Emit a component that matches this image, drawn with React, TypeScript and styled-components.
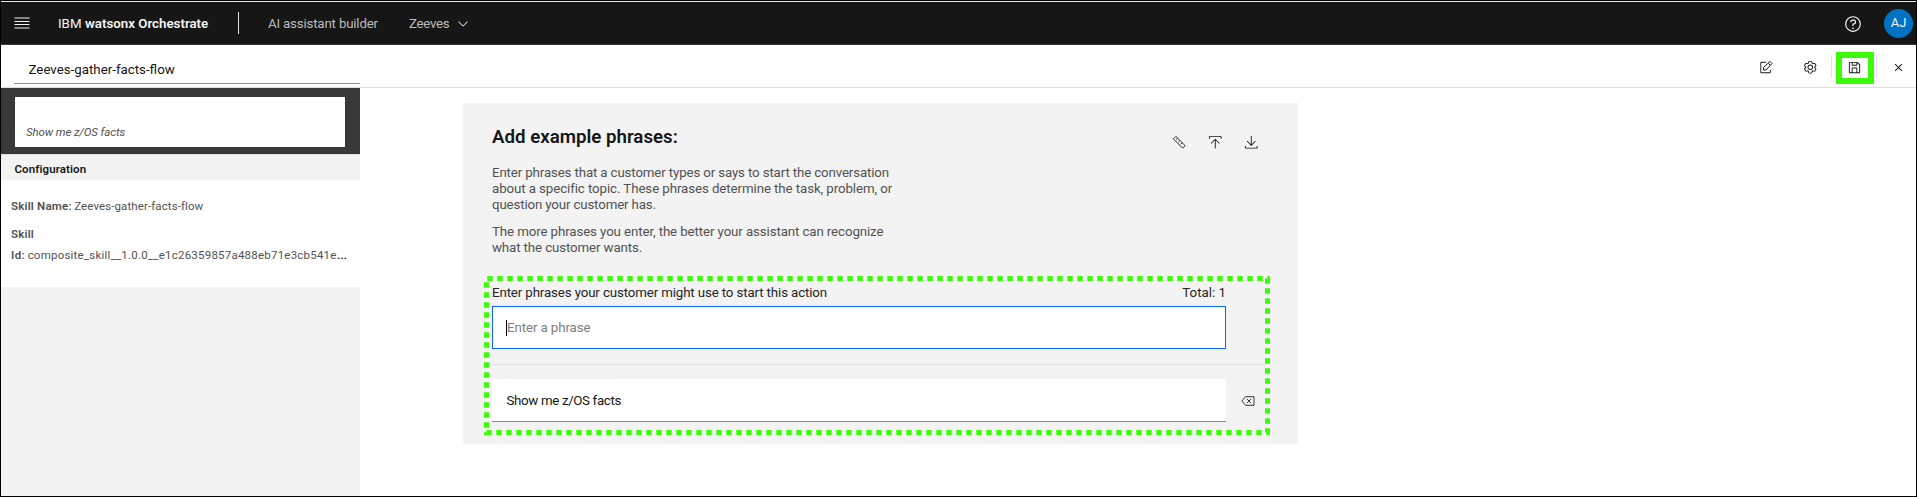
import React from "react";
import styled, { createGlobalStyle } from "styled-components";

const GlobalStyle = createGlobalStyle`
  *, *::before, *::after { box-sizing: border-box; }
  body { margin: 0; background: #fff; }
  h2, p { margin: 0; }
  button { border: 0; padding: 0; background: none; color: inherit; font: inherit; }
`;

const Frame = styled.div`
  position: relative;
  display: flex;
  flex-direction: column;
  width: 1917px;
  height: 497px;
  border: 1px solid #000;
  background: #fff;
  color: #161616;
  font: 400 13.3px/16px Roboto, "Liberation Sans", sans-serif;
  overflow: hidden;
`;

const Text = styled.span<{ $track?: number }>`
  white-space: nowrap;
  letter-spacing: ${(p) => p.$track ?? 0}px;
`;

const Header = styled.header`
  display: flex;
  align-items: center;
  flex: none;
  height: 44px;
  padding: 0 3px 0 13px;
  border-top: 1px solid #e8e8e8;
  border-bottom: 1px solid #393939;
  background: #161616;
  color: #c6c6c6;
`;

const Product = styled.div`
  display: flex;
  gap: 3.5px;
  width: 180px;
  margin-left: 28px;
  padding-top: 2px;
  color: #f4f4f4;
`;

const Strong = styled(Text)`
  font-weight: 600;
`;

const HeaderDivider = styled.div`
  width: 1px;
  height: 22px;
  background: #e0e0e0;
`;

const HeaderLinks = styled.nav`
  display: flex;
  align-items: center;
  flex: 1;
  margin-left: 29px;
  padding-top: 2px;
  color: #bdbdbd;
`;

const LinkText = styled(Text)<{ $gap: number }>`
  margin-right: ${(p) => p.$gap}px;
`;

const HelpButton = styled.button`
  display: flex;
  margin-right: 22px;
  padding-top: 1px;
  color: #fff;
`;

const Avatar = styled.div`
  display: flex;
  align-items: center;
  justify-content: center;
  width: 29px;
  height: 29px;
  border-radius: 50%;
  background: #0072c3;
  color: #e5f6ff;
  font-size: 13px;
`;

const Toolbar = styled.div`
  display: flex;
  flex: none;
  height: 43px;
  padding-left: 13px;
  border-bottom: 1px solid #e0e0e0;
`;

const TitleField = styled.div`
  width: 346px;
  height: 39px;
  padding: 17px 0 0 14.5px;
  border-bottom: 1px solid #8d8d8d;
`;

const Tools = styled.div`
  display: flex;
  align-items: center;
  margin-left: auto;
  height: 44px;
`;

const ToolButton = styled.button<{ $last?: boolean }>`
  display: flex;
  align-items: center;
  justify-content: center;
  width: ${(p) => (p.$last ? 39 : 44)}px;
  padding-left: ${(p) => (p.$last ? 4 : 2)}px;
  height: 44px;
`;

const ToolDivider = styled.div`
  width: 1px;
  height: 22px;
  background: #e0e0e0;
`;

const SaveMark = styled.div`
  display: flex;
  align-items: center;
  justify-content: center;
  width: 38px;
  height: 32px;
  margin: 2px 2px 0 4px;
  padding: 0 2px 1px 0;
  border: 6px solid #3dfc09;
`;

const Body = styled.div`
  display: flex;
  flex: 1;
  min-height: 0;
`;

const Sidebar = styled.aside`
  width: 359px;
  flex: none;
  background: #f3f3f3;
  color: #525252;
  font-size: 11.5px;
`;

const StepHolder = styled.div`
  height: 67px;
  padding: 9px 15px 7px 14px;
  border-bottom: 1px solid #e0e0e0;
  background: #393939;
  background-clip: padding-box;
`;

const StepCard = styled.div`
  display: flex;
  align-items: flex-end;
  height: 50px;
  padding: 0 11px 7px;
  background: #fff;
  font-style: italic;
  font-size: 11.5px;
`;

const SectionTitle = styled.div`
  height: 25px;
  padding: 6px 0 0 13.5px;
  color: #161616;
  font-weight: 600;
`;

const Details = styled.div`
  display: flex;
  flex-direction: column;
  height: 107px;
  padding: 18px 0 0 10px;
  background: #fff;
`;

const Detail = styled.div<{ $height: number }>`
  display: flex;
  gap: 2.5px;
  height: ${(p) => p.$height}px;
`;

const Ellipsis = styled(Text)`
  margin-left: -2px;
  color: #161616;
  font-weight: 600;
`;

const Panel = styled.main`
  width: 835px;
  height: 341px;
  margin: 15px 0 0 103px;
  padding: 0 33px 0 29px;
  background: #f3f3f3;
`;

const PanelTop = styled.div`
  display: flex;
  justify-content: space-between;
  height: 62px;
`;

const Heading = styled.h2`
  padding-top: 22px;
  font-weight: 600;
  font-size: 18.7px;
  line-height: 24px;
  white-space: nowrap;
`;

const PanelTools = styled.div`
  display: flex;
  gap: 21.5px;
  padding: 32px 6.5px 0 0;
`;

const Paragraph = styled.p`
  display: flex;
  flex-direction: column;
  margin-bottom: 11px;
  color: #525252;
`;

const LabelRow = styled.div`
  display: flex;
  justify-content: space-between;
  width: 734px;
  padding-top: 18px;
  height: 39px;
  color: #262626;
`;

const PhraseInput = styled.div`
  display: flex;
  align-items: center;
  width: 734px;
  height: 43px;
  padding-left: 13px;
  border: 1px solid #0f62fe;
  background: #fff;
  color: #7d7d7d;
`;

const Caret = styled.span`
  width: 1px;
  height: 16px;
  background: #000;
`;

const Rule = styled.div`
  height: 1px;
  margin: 15px 0 14px;
  background: #e0e0e0;
`;

const PhraseRow = styled.div`
  display: flex;
  align-items: center;
  gap: 15px;
`;

const Phrase = styled.div`
  display: flex;
  align-items: center;
  width: 734px;
  height: 43px;
  padding: 1px 0 0 14.5px;
  border-bottom: 1px solid #8d8d8d;
  background: #fff;
`;

const Callout = styled.svg`
  position: absolute;
  left: 483px;
  top: 275px;
  pointer-events: none;
`;

const Icon = ({ size = 14.5, children }: { size?: number; children: React.ReactNode }) => (
  <svg width={size} height={size} viewBox="0 0 32 32" fill="currentColor">
    {children}
  </svg>
);

const MenuIcon = () => (
  <svg width="16" height="14" viewBox="0 0 16 14" fill="#f4f4f4">
    <path d="M.5 1.5h15v1H.5zM.5 5h15v1H.5zM.5 8h15v1H.5zM.5 11.5h15v1H.5z" />
  </svg>
);

const ChevronIcon = () => (
  <svg width="10" height="6" viewBox="0 0 10 6" fill="none" stroke="#c6c6c6" strokeWidth="1.1">
    <path d="M.5.7 5 5.1 9.5.7" />
  </svg>
);

const HelpIcon = () => (
  <Icon size={18}>
    <path d="M16 2a14 14 0 1 0 14 14A14 14 0 0 0 16 2Zm0 26a12 12 0 1 1 12-12 12 12 0 0 1-12 12Z" />
    <circle cx="16" cy="23.5" r="1.5" />
    <path d="M17 8h-1.5a4.49 4.49 0 0 0-4.5 4.5v.5h2v-.5a2.5 2.5 0 0 1 2.5-2.5H17a2.5 2.5 0 0 1 0 5h-2v4.5h2V17a4.5 4.5 0 0 0 0-9Z" />
  </Icon>
);

const EditIcon = () => (
  <Icon>
    <path d="M26 27H5V6h11v-2H5a2 2 0 0 0-2 2v21a2 2 0 0 0 2 2h19a2 2 0 0 0 2-2v-5h-2v5Z" />
    <path
      d="M10 22v-5.5L24.3 3.2 28.8 7.7 15.5 22ZM20.5 7l4.5 4.5"
      fill="none"
      stroke="currentColor"
      strokeWidth="2.2"
    />
  </Icon>
);

const SettingsIcon = () => (
  <Icon>
    <path d="M27 16.76c0-.25 0-.5 0-.76s0-.51 0-.77l1.92-1.68A2 2 0 0 0 29.3 11L26.94 7a2 2 0 0 0-1.73-1 2 2 0 0 0-.64.1l-2.43.82a11.35 11.35 0 0 0-1.31-.75l-.51-2.52a2 2 0 0 0-2-1.61H13.64a2 2 0 0 0-2 1.61l-.51 2.52a11.48 11.48 0 0 0-1.32.75L7.43 6.06A2 2 0 0 0 6.79 6 2 2 0 0 0 5.06 7L2.7 11a2 2 0 0 0 .41 2.51L5 15.24c0 .25 0 .5 0 .76s0 .51 0 .77l-1.89 1.68A2 2 0 0 0 2.7 21l2.36 4a2 2 0 0 0 1.73 1 2 2 0 0 0 .64-.1l2.43-.82a11.35 11.35 0 0 0 1.31.75l.51 2.52a2 2 0 0 0 2 1.61h4.72a2 2 0 0 0 2-1.61l.51-2.52a11.48 11.48 0 0 0 1.32-.75l2.42.82a2 2 0 0 0 .64.1 2 2 0 0 0 1.73-1l2.28-4a2 2 0 0 0-.41-2.51ZM25.21 24l-3.43-1.16a8.86 8.86 0 0 1-2.71 1.57L18.36 28H13.64l-.71-3.55a9.36 9.36 0 0 1-2.7-1.57L6.79 24 4.43 20l2.72-2.4a8.9 8.9 0 0 1 0-3.13L4.43 12 6.79 8l3.43 1.16a8.86 8.86 0 0 1 2.71-1.57L13.64 4h4.72l.71 3.55a9.36 9.36 0 0 1 2.7 1.57L25.21 8 27.57 12l-2.72 2.4a8.9 8.9 0 0 1 0 3.13L27.57 20Z" />
    <path d="M16 22a6 6 0 1 1 6-6 5.94 5.94 0 0 1-6 6Zm0-10a3.91 3.91 0 0 0-4 4 3.91 3.91 0 0 0 4 4 3.91 3.91 0 0 0 4-4 3.91 3.91 0 0 0-4-4Z" />
  </Icon>
);

const SaveIcon = () => (
  <Icon size={15}>
    <path d="M27.71 9.29l-5-5A1 1 0 0 0 22 4H6a2 2 0 0 0-2 2v20a2 2 0 0 0 2 2h20a2 2 0 0 0 2-2V10a1 1 0 0 0-.29-.71ZM12 6h8v4h-8Zm8 20h-8v-8h8Zm2 0v-8a2 2 0 0 0-2-2h-8a2 2 0 0 0-2 2v8H6V6h4v4a2 2 0 0 0 2 2h8a2 2 0 0 0 2-2V6.41l4 4V26Z" />
  </Icon>
);

const CloseIcon = () => (
  <Icon size={15}>
    <path d="M17.414 16 24 9.414 22.586 8 16 14.586 9.414 8 8 9.414 14.586 16 8 22.586 9.414 24 16 17.414 22.586 24 24 22.586Z" />
  </Icon>
);

const RulerIcon = () => (
  <Icon>
    <path
      d="M3 8.5 8.5 3 29 23.5 23.5 29ZM12.5 7l-3.3 3.3M17.5 12l-3.3 3.3M22.5 17l-3.3 3.3"
      fill="none"
      stroke="currentColor"
      strokeWidth="2"
    />
  </Icon>
);

const UploadIcon = () => (
  <Icon>
    <path d="M6 18l1.41 1.41L15 11.83V30h2V11.83l7.59 7.58L26 18 16 8Z" />
    <path d="M4 8V4h24v4h2V4a2 2 0 0 0-2-2H4a2 2 0 0 0-2 2v4Z" />
  </Icon>
);

const DownloadIcon = () => (
  <Icon>
    <path d="M28 24v4H4v-4H2v4a2 2 0 0 0 2 2h24a2 2 0 0 0 2-2v-4Z" />
    <path d="M26 14l-1.41-1.41L17 20.17V2h-2v18.17l-7.59-7.58L6 14l10 10Z" />
  </Icon>
);

const DeleteIcon = () => (
  <svg width="14" height="10" viewBox="0 0 14 10" fill="none" stroke="#393939">
    <path d="M4.5.7h8.5v8.6H4.5L.8 5ZM5.8 2.8l4.4 4.4M10.2 2.8 5.8 7.2" />
  </svg>
);

export default function App() {
  return (
    <Frame>
      <GlobalStyle />
      <Header>
        <MenuIcon />
        <Product>
          <Text>IBM</Text>
          <Strong>watsonx Orchestrate</Strong>
        </Product>
        <HeaderDivider />
        <HeaderLinks>
          <LinkText $track={-0.18} $gap={31}>AI assistant builder</LinkText>
          <LinkText $track={-0.3} $gap={9}>Zeeves</LinkText>
          <ChevronIcon />
        </HeaderLinks>
        <HelpButton aria-label="Help">
          <HelpIcon />
        </HelpButton>
        <Avatar>AJ</Avatar>
      </Header>
      <Toolbar>
        <TitleField>
          <Text>Zeeves-gather-facts-flow</Text>
        </TitleField>
        <Tools>
          <ToolButton aria-label="Edit"><EditIcon /></ToolButton>
          <ToolButton aria-label="Settings"><SettingsIcon /></ToolButton>
          <ToolDivider />
          <SaveMark><SaveIcon /></SaveMark>
          <ToolDivider />
          <ToolButton $last aria-label="Close"><CloseIcon /></ToolButton>
        </Tools>
      </Toolbar>
      <Body>
        <Sidebar>
          <StepHolder>
            <StepCard>
              <Text $track={-0.12}>Show me z/OS facts</Text>
            </StepCard>
          </StepHolder>
          <SectionTitle>
            <Text $track={0.1}>Configuration</Text>
          </SectionTitle>
          <Details>
            <Detail $height={28}>
              <Strong $track={0.2}>Skill Name:</Strong>
              <Text $track={0.1}>Zeeves-gather-facts-flow</Text>
            </Detail>
            <Detail $height={21}>
              <Strong $track={0.2}>Skill</Strong>
            </Detail>
            <Detail $height={16}>
              <Strong $track={0.4}>Id:</Strong>
              <Text $track={0.22}>composite_skill__1.0.0__e1c26359857a488eb71e3cb541e</Text>
              <Ellipsis>...</Ellipsis>
            </Detail>
          </Details>
        </Sidebar>
        <Panel>
          <PanelTop>
            <Heading>Add example phrases:</Heading>
            <PanelTools>
              <RulerIcon />
              <UploadIcon />
              <DownloadIcon />
            </PanelTools>
          </PanelTop>
          <Paragraph>
            <Text $track={-0.14}>Enter phrases that a customer types or says to start the conversation</Text>
            <Text $track={-0.09}>about a specific topic. These phrases determine the task, problem, or</Text>
            <Text $track={-0.15}>question your customer has.</Text>
          </Paragraph>
          <Paragraph>
            <Text $track={-0.11}>The more phrases you enter, the better your assistant can recognize</Text>
            <Text $track={-0.12}>what the customer wants.</Text>
          </Paragraph>
          <LabelRow>
            <Text $track={-0.13}>Enter phrases your customer might use to start this action</Text>
            <Text>Total: 1</Text>
          </LabelRow>
          <PhraseInput>
            <Caret />
            <Text $track={-0.1}>Enter a phrase</Text>
          </PhraseInput>
          <Rule />
          <PhraseRow>
            <Phrase>
              <Text $track={-0.34}>Show me z/OS facts</Text>
            </Phrase>
            <DeleteIcon />
          </PhraseRow>
        </Panel>
      </Body>
      <Callout width="788" height="162" viewBox="0 0 788 162">
        <path
          d="M2.5 2.5H783.5V156.500H2.5Z"
          fill="none"
          stroke="#3dfc09"
          strokeWidth="5"
          strokeDasharray="5.4 4.6"
          strokeDashoffset="-0.8"
        />
      </Callout>
    </Frame>
  );
}
